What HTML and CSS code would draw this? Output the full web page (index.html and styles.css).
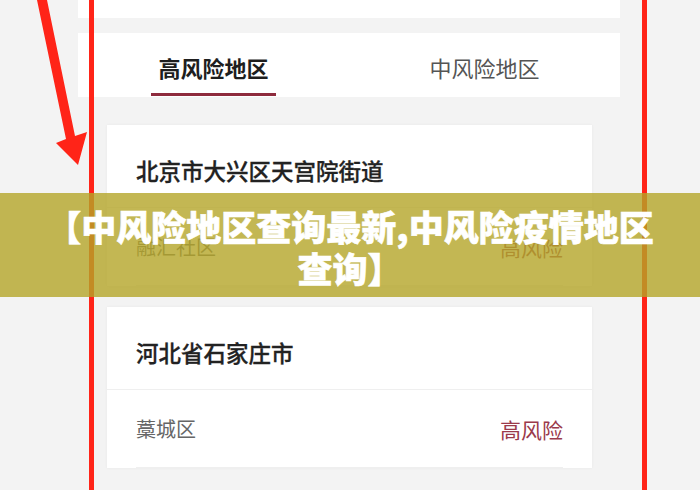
FILE: index.html
```html
<!DOCTYPE html>
<html lang="zh-CN">
<head>
    <meta charset="UTF-8" />
    <title>中风险地区查询</title>
    <link rel="stylesheet" href="styles.css">
</head>
<body>
    <div class="page">
        <div class="top-card"></div>

        <div class="tabs">
            <div class="tab active"><span>高风险地区</span></div>
            <div class="tab"><span>中风险地区</span></div>
        </div>

        <div class="list">
            <div class="card first">
                <div class="card-title">北京市大兴区天宫院街道</div>
                <div class="row">
                    <span class="area">融汇社区</span>
                    <span class="level">高风险</span>
                </div>
            </div>
            <div class="card">
                <div class="card-title">河北省石家庄市</div>
                <div class="row">
                    <span class="area">藁城区</span>
                    <span class="level">高风险</span>
                </div>
            </div>
        </div>
    </div>

    <!-- 标注用的红线和箭头 -->
    <div class="mark-line left"></div>
    <div class="mark-line right"></div>
    <svg class="arrow" width="100" height="170" viewBox="0 0 100 170">
        <polygon points="37,0 47,0 75,136 87,132 78,165 56,143 66,139" fill="#ff2418" />
    </svg>

    <div class="banner">
        <p>【中风险地区查询最新,中风险疫情地区<br>查询】</p>
    </div>
</body>
</html>
```

FILE: styles.css
```css
body {
    margin: 0;
    width: 700px;
    height: 490px;
    overflow: hidden;
    position: relative;
    background: #f3f3f3;
    font-family: "Noto Sans CJK SC", "Noto Sans", sans-serif;
}
.page {
    padding: 0 80px 0 78px;
}
.top-card {
    height: 18px;
    background: #fff;
}
.tabs {
    display: flex;
    height: 64px;
    margin-top: 15px;
    background: #fff;
}
.tab {
    flex: 1;
    display: flex;
    justify-content: center;
    position: relative;
    padding-top: 18px;
    font-size: 22px;
    line-height: 32px;
    color: #555;
}
.tab.active {
    color: #1e1e1e;
    font-weight: 700;
}
.tab.active::after {
    content: "";
    position: absolute;
    bottom: 1px;
    left: 50%;
    width: 125px;
    margin-left: -63px;
    height: 3px;
    background: #8e2b3d;
}
.list {
    padding: 28px 28px 0 29px;
}
.card {
    background: #fff;
    box-shadow: 0 0 3px rgba(0, 0, 0, 0.05);
}
.card.first {
    margin-bottom: 21px;
}
.card-title {
    height: 83px;
    box-sizing: border-box;
    padding: 30px 0 0 29px;
    border-bottom: 1px solid #efefef;
    font-size: 22.5px;
    line-height: 30px;
    font-weight: 500;
    color: #222;
    -webkit-text-stroke: 0.3px #222;
}
.row {
    display: flex;
    justify-content: space-between;
    align-items: center;
    height: 77px;
    margin: 0 29px;
    border-bottom: 1px solid #efefef;
}
.area {
    font-size: 20px;
    color: #666;
}
.level {
    font-size: 21px;
    color: #9b3a4b;
}
.mark-line {
    position: absolute;
    top: 0;
    bottom: 0;
    width: 5px;
    background: #ff2418;
}
.mark-line.left {
    left: 89px;
}
.mark-line.right {
    left: 642px;
}
.arrow {
    position: absolute;
    left: 0;
    top: 0;
}
.banner {
    position: absolute;
    left: 0;
    right: 0;
    top: 193px;
    height: 104px;
    display: flex;
    align-items: center;
    justify-content: center;
    background: rgba(180, 165, 40, 0.8);
}
.banner p {
    margin: 4px 0 0;
    text-align: center;
    font-size: 35px;
    line-height: 42px;
    font-weight: 900;
    color: #fff;
    -webkit-text-stroke: 0.6px #fff;
}
```
